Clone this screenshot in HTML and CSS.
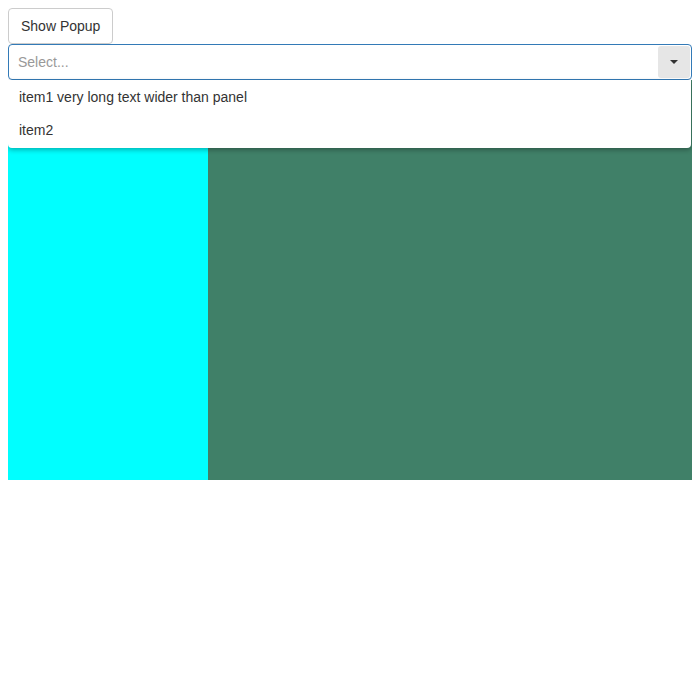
FILE: index.html
```html
<!DOCTYPE html>
<html>
<head>
<meta charset="utf-8">
<link rel="stylesheet" href="styles.css">
</head>
<body>
<button class="btn">Show Popup</button>
<div class="combo-wrap">
  <div class="combo">
    <span class="placeholder">Select...</span>
    <span class="toggle"><span class="caret"></span></span>
  </div>
  <div class="panel">
    <div class="item">item1 very long text wider than panel</div>
    <div class="item">item2</div>
  </div>
</div>
<div class="content">
  <div class="left"></div>
  <div class="right"></div>
</div>
</body>
</html>
```
FILE: styles.css
```css
body {
  margin: 8px;
  font-family: "Liberation Sans", Arial, sans-serif;
  font-size: 14px;
  color: #333;
}
.btn {
  display: block;
  box-sizing: border-box;
  height: 36px;
  padding: 0 12px;
  white-space: nowrap;
  font-family: inherit;
  font-size: 14px;
  color: #333;
  background: #fff;
  border: 1px solid #ccc;
  border-radius: 4px;
  text-align: center;
}
.combo-wrap {
  position: relative;
}
.combo {
  box-sizing: border-box;
  height: 36px;
  border: 1px solid #337ab7;
  border-radius: 4px;
  display: flex;
  align-items: center;
  justify-content: space-between;
  padding: 0 1px 0 9px;
}
.placeholder {
  color: #999;
}
.toggle {
  width: 32px;
  height: 32px;
  background: #e6e6e6;
  border-radius: 3px;
  display: flex;
  align-items: center;
  justify-content: center;
}
.caret {
  width: 0;
  height: 0;
  border-left: 4px solid transparent;
  border-right: 4px solid transparent;
  border-top: 4px solid #333;
}
.panel {
  position: absolute;
  top: 36px;
  left: 0;
  right: 1px;
  background: #fff;
  border-radius: 0 0 4px 4px;
  box-shadow: 0 2px 5px rgba(0,0,0,0.3);
  padding: 1px 0 1px;
}
.item {
  height: 33px;
  line-height: 33px;
  padding: 0 11px;
}
.content {
  display: flex;
  height: 400px;
}
.left {
  width: 200px;
  background: #00ffff;
}
.right {
  flex: 1;
  background: #408068;
}
```
